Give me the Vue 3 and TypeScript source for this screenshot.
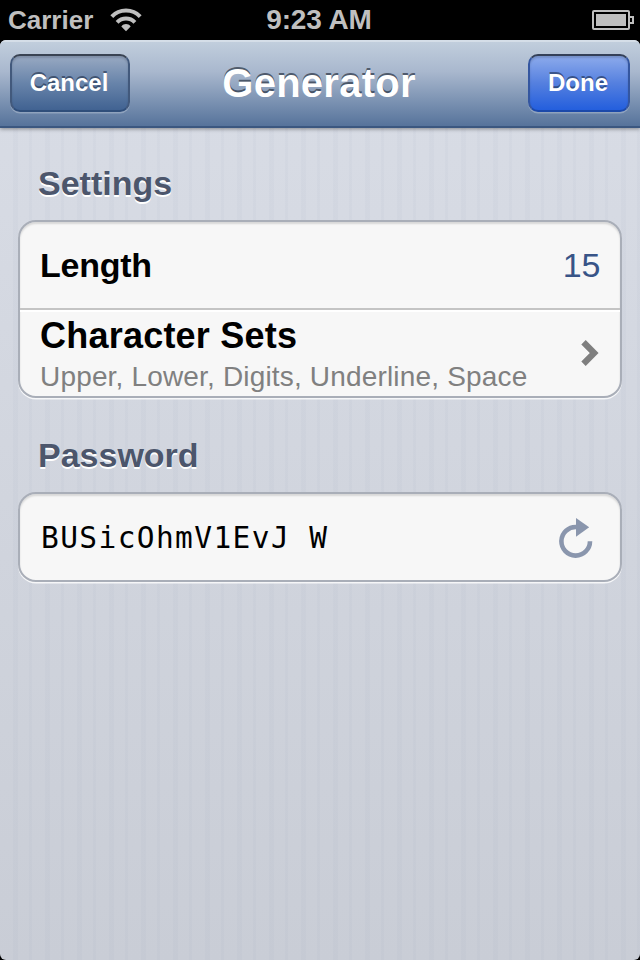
<script setup lang="ts">
import { ref } from 'vue'

const length = ref<number>(15)
const characterSets = ref<string[]>(['Upper', 'Lower', 'Digits', 'Underline', 'Space'])
const password = ref<string>('BUSicOhmV1EvJ W')
</script>

<template>
  <div class="phone">
    <header class="status">
      <div class="carrier">
        <span>Carrier</span>
        <svg class="wifi" width="32" height="24" viewBox="0 0 32 24" fill="none" stroke="#bfbfbf" stroke-width="4">
          <path d="M1.800 8.600C9.500 .6 22.500 .6 30.200 8.600" />
          <path d="M7.100 14.300C12 9.200 20 9.200 24.900 14.300" />
          <path d="M11.300 18.400C14 15.300 18 15.300 20.700 18.400L16 23.200Z" fill="#bfbfbf" stroke="none" />
        </svg>
      </div>
      <span class="time">9:23 AM</span>
      <svg class="battery" width="42" height="20" viewBox="0 0 42 20">
        <rect x="1" y="1" width="36" height="18" rx="1" fill="none" stroke="#bfbfbf" stroke-width="2" />
        <rect x="4" y="4" width="30" height="12" fill="#bfbfbf" />
        <path d="M38 7H41V13H38" fill="none" stroke="#bfbfbf" stroke-width="2" />
      </svg>
    </header>

    <div class="screen">
      <nav class="navbar">
        <button class="btn cancel">Cancel</button>
        <h1>Generator</h1>
        <button class="btn done">Done</button>
      </nav>

      <main>
        <h2>Settings</h2>
        <section class="group">
          <div class="row">
            <span class="label">Length</span>
            <span class="value">{{ length }}</span>
          </div>
          <div class="row divided">
            <div class="stack">
              <span class="name">Character Sets</span>
              <span class="detail">{{ characterSets.join(', ') }}</span>
            </div>
            <svg class="chevron" width="18" height="28" viewBox="0 0 18 28" fill="none" stroke="#7f7f7f" stroke-width="6.200">
              <path d="M2.500 3.200L13.200 14L2.500 24.800" />
            </svg>
          </div>
        </section>

        <h2>Password</h2>
        <section class="group">
          <div class="row">
            <span class="password">{{ password }}</span>
            <svg class="refresh" width="34" height="42" viewBox="0 0 34 42">
              <path d="M17.500 11A14.300 14.300 0 1 0 31 25.200" fill="none" stroke="#8a96ad" stroke-width="4.600" />
              <path d="M17 2L30.200 11.300L17 20.800Z" fill="#8a96ad" />
            </svg>
          </div>
        </section>
      </main>
    </div>
  </div>
</template>

<style>
body {
  margin: 0;
  background: #000;
}
</style>

<style scoped>
.phone {
  width: 640px;
  height: 960px;
  display: flex;
  flex-direction: column;
  overflow: hidden;
  background: #000;
  font-family: "Liberation Sans", Arial, sans-serif;
}
.status {
  height: 40px;
  flex: none;
  box-sizing: border-box;
  padding: 0 6px 0 8px;
  display: grid;
  grid-template-columns: 1fr auto 1fr;
  align-items: center;
  color: #bfbfbf;
  font-weight: bold;
}
.carrier {
  display: flex;
  align-items: center;
  gap: 17px;
  font-size: 26px;
}
.time {
  padding-right: 4px;
  font-size: 28px;
  letter-spacing: -0.1px;
}
.battery {
  justify-self: end;
}
.screen {
  flex: 1;
  display: flex;
  flex-direction: column;
  overflow: hidden;
  border-radius: 6px;
  background:
    repeating-linear-gradient(to right, transparent 0 13px, rgba(120, 135, 165, 0.045) 13px 18px, transparent 18px 29px, rgba(120, 135, 165, 0.045) 29px 32px),
    linear-gradient(#d9dde6, #c9cdd6);
}
.navbar {
  height: 88px;
  flex: none;
  box-sizing: border-box;
  padding: 0 10px 2px;
  display: grid;
  grid-template-columns: 1fr auto 1fr;
  align-items: center;
  border-top: 2px solid #d5dee8;
  border-bottom: 2px solid #3b5780;
  background: linear-gradient(#c1cedd, #a9b8ce 35%, #56739b);
  box-shadow: 0 1px 4px rgba(0, 0, 0, 0.4);
}
h1 {
  margin: 0;
  padding-right: 2px;
  font-size: 40px;
  line-height: 46px;
  letter-spacing: 0.25px;
  color: #fff;
  text-shadow: 0 -2px 0 rgba(40, 50, 65, 0.7);
}
.btn {
  height: 58px;
  padding: 0 2px 1px 0;
  border: 2px solid;
  border-radius: 10px;
  font: bold 24px "Liberation Sans", Arial, sans-serif;
  color: #fff;
  text-shadow: 0 -2px 0 rgba(20, 35, 60, 0.55);
  background-origin: border-box;
  box-shadow: 0 1.500px 0 rgba(255, 255, 255, 0.25), inset 0 2px 2px rgba(30, 40, 60, 0.2);
}
.cancel {
  width: 120px;
  justify-self: start;
  border-color: #394353 #42597c #2f4e7a;
  background-image: linear-gradient(#9cacc4, #6884aa 50%, #3e6090);
}
.done {
  width: 102px;
  justify-self: end;
  border-color: #344058 #3456a0 #1c49a9;
  background-image: linear-gradient(#91aeed, #5580df 50%, #205cdd);
}
main {
  padding: 34px 18px 0;
}
h2 {
  margin: 0 0 16px 20px;
  font-size: 34px;
  line-height: 42px;
  color: #4c566c;
  text-shadow: 0 2px 0 #fff;
}
.group {
  margin-bottom: 36px;
  box-sizing: border-box;
  border: 2px solid #a9aeb8;
  border-radius: 18px;
  overflow: hidden;
  background: #f7f7f7;
  box-shadow: 0 1.500px 0 rgba(255, 255, 255, 0.8), inset 0 2px 2px rgba(0, 0, 0, 0.13);
}
.row {
  height: 86px;
  box-sizing: border-box;
  padding: 0 20px;
  display: flex;
  align-items: center;
  justify-content: space-between;
}
.divided {
  height: 88px;
  border-top: 2px solid #c4c4c4;
  box-shadow: inset 0 2px 0 #fff;
}
.label {
  font-size: 34px;
  letter-spacing: -0.25px;
}
.label,
.name {
  font-weight: bold;
  color: #000;
}
.value {
  font-size: 34px;
  letter-spacing: -0.3px;
  color: #385487;
}
.stack {
  padding-top: 6px;
  display: flex;
  flex-direction: column;
}
.name {
  font-size: 36px;
  line-height: 42px;
  letter-spacing: 0.22px;
}
.detail {
  font-size: 28px;
  line-height: 40px;
  letter-spacing: 0.17px;
  color: #808080;
}
.chevron {
  margin-right: 1px;
}
.password {
  padding: 1px 0 0 1px;
  font-family: "DejaVu Sans Mono", monospace;
  font-size: 29.500px;
  letter-spacing: 1.400px;
  white-space: pre;
  color: #000;
}
.refresh {
  margin-right: 7px;
}
</style>
